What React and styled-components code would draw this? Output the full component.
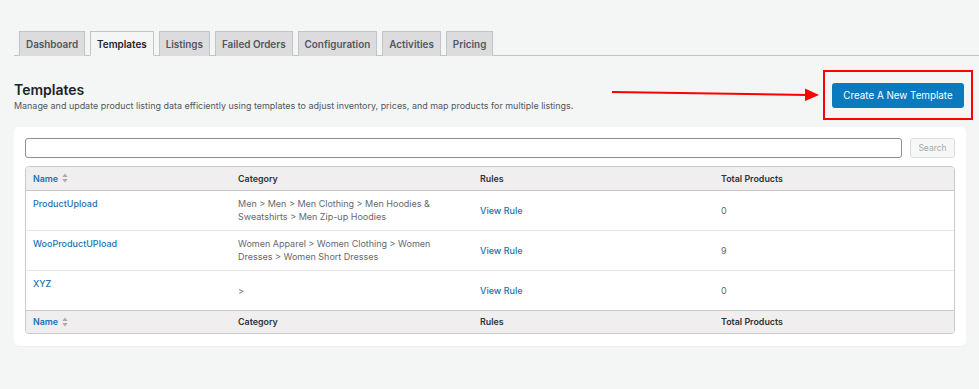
import React from "react";
import styled, { createGlobalStyle } from "styled-components";

const Global = createGlobalStyle`
  html, body { margin: 0; padding: 0; background: #f4f5f5; }
  body { font-family: Inter, "Noto Sans", sans-serif; color: #1d2327; }
  * { box-sizing: border-box; }
`;

const Page = styled.div`
  position: relative;
  width: 979px;
  height: 389px;
  padding: 31px 0 0 14px;
`;

const TabBar = styled.nav`
  display: flex;
  gap: 5px;
  padding-left: 5px;
  border-bottom: 1px solid #c3c4c7;
  height: 25px;
`;

const Tab = styled.a`
  display: flex;
  align-items: center;
  height: 25px;
  padding: 0 6px;
  font-size: 9.9px;
  font-weight: 600;
  color: ${(p) => (p.$active ? "#1d2327" : "#50575e")};
  background: ${(p) => (p.$active ? "#f4f5f5" : "#dcdcde")};
  border: 1px solid #c3c4c7;
  border-bottom: ${(p) => (p.$active ? "1px solid #f4f5f5" : "none")};
  text-decoration: none;
  cursor: pointer;
`;

const Header = styled.div`
  width: 952px;
  display: flex;
  justify-content: space-between;
  align-items: flex-start;
  margin-top: 14px;
  height: 57px;
`;

const TitleBlock = styled.div`
  padding-top: 11px;
`;

const Title = styled.h1`
  margin: 0;
  font-size: 14px;
  font-weight: 600;
  line-height: 17px;
  color: #1d2327;
`;

const Desc = styled.p`
  margin: 2px 0 0;
  font-size: 8.95px;
  line-height: 12px;
  color: #50575e;
`;

const Highlight = styled.div`
  border: 2px solid #ff0000;
  padding: 11px 7px 10px 7px;
  margin-right: -7px;
`;

const PrimaryButton = styled.button`
  display: block;
  width: 132px;
  height: 25px;
  background: #0a7abf;
  color: #fff;
  border: none;
  border-radius: 3px;
  font-family: Inter, "Noto Sans", sans-serif;
  font-size: 9.8px;
  cursor: pointer;
`;

const Arrow = styled.svg`
  position: absolute;
  left: 610px;
  top: 86px;
`;

const Card = styled.section`
  width: 952px;
  background: #fff;
  border-radius: 5px;
  padding: 11px 11px 12px;
  box-shadow: 0 1px 1px rgba(0, 0, 0, 0.03);
`;

const SearchRow = styled.div`
  display: flex;
  gap: 8px;
  margin-bottom: 8px;
`;

const SearchInput = styled.input`
  flex: 1;
  height: 20px;
  border: 1px solid #8c8f94;
  border-radius: 3px;
  background: #fff;
`;

const SearchButton = styled.button`
  width: 45px;
  height: 20px;
  border: 1px solid #dcdcde;
  background: #f6f7f7;
  color: #a7aaad;
  border-radius: 3px;
  font-family: Inter, "Noto Sans", sans-serif;
  font-size: 8.5px;
  padding: 0;
`;

const TableWrap = styled.div`
  border: 1px solid #c9c9cc;
  border-radius: 4px;
  overflow: hidden;
`;

const Table = styled.table`
  width: 100%;
  border-collapse: collapse;
  table-layout: fixed;
`;

const HeadCell = styled.th`
  height: 23px;
  background: #f0eeee;
  text-align: left;
  font-size: 8.9px;
  font-weight: 600;
  color: #2c3338;
  padding: 0 7px;
  ${(p) => (p.$foot ? "border-top: 1px solid #c9c9cc;" : "border-bottom: 1px solid #c9c9cc;")}
`;

const SortLink = styled.a`
  display: inline-flex;
  align-items: center;
  gap: 4px;
  color: #2271b1;
  text-decoration: none;
`;

const Cell = styled.td`
  height: 40px;
  padding: ${(p) => (p.$top ? "6px 7px 0 7px" : "0 7px")};
  vertical-align: ${(p) => (p.$top ? "top" : "middle")};
  font-size: 9px;
  line-height: 13px;
  color: #646970;
  border-top: ${(p) => (p.$first ? "none" : "1px solid #e6e6e8")};
`;

const Link = styled.a`
  color: #2271b1;
  text-decoration: none;
  font-weight: 500;
`;

const SortIcon = () => (
  <svg width="6" height="10" viewBox="0 0 6 10">
    <path d="M3 0.5 L5.6 4 H0.4 Z" fill="#a7aaad" />
    <path d="M3 9.5 L5.6 6 H0.4 Z" fill="#a7aaad" />
  </svg>
);

const rows = [
  { name: "ProductUpload", cat: "Men > Men > Men Clothing > Men Hoodies & Sweatshirts > Men Zip-up Hoodies", total: "0" },
  { name: "WooProductUPload", cat: "Women Apparel > Women Clothing > Women Dresses > Women Short Dresses", total: "9" },
  { name: "XYZ", cat: ">", total: "0" },
];

const tabs = ["Dashboard", "Templates", "Listings", "Failed Orders", "Configuration", "Activities", "Pricing"];

const HeadRow = ({ foot }) => (
  <tr>
    <HeadCell $foot={foot}>
      <SortLink>
        Name <SortIcon />
      </SortLink>
    </HeadCell>
    <HeadCell $foot={foot}>Category</HeadCell>
    <HeadCell $foot={foot}>Rules</HeadCell>
    <HeadCell $foot={foot}>Total Products</HeadCell>
  </tr>
);

export default function App() {
  return (
    <>
      <Global />
      <Page>
        <TabBar>
          {tabs.map((t) => (
            <Tab key={t} $active={t === "Templates"}>
              {t}
            </Tab>
          ))}
        </TabBar>
        <Header>
          <TitleBlock>
            <Title>Templates</Title>
            <Desc>
              Manage and update product listing data efficiently using templates to adjust inventory, prices, and map
              products for multiple listings.
            </Desc>
          </TitleBlock>
          <Highlight>
            <PrimaryButton>Create A New Template</PrimaryButton>
          </Highlight>
        </Header>
        <Arrow width="212" height="16" viewBox="0 0 212 16">
          <line x1="2" y1="6" x2="197" y2="9" stroke="#ff0000" strokeWidth="2" />
          <path d="M195 2.5 L209 9 L195 15 Z" fill="#ff0000" />
        </Arrow>
        <Card>
          <SearchRow>
            <SearchInput />
            <SearchButton>Search</SearchButton>
          </SearchRow>
          <TableWrap>
            <Table>
              <colgroup>
                <col style={{ width: "205px" }} />
                <col style={{ width: "242px" }} />
                <col style={{ width: "241px" }} />
                <col />
              </colgroup>
              <thead>
                <HeadRow />
              </thead>
              <tbody>
                {rows.map((r, i) => (
                  <tr key={r.name}>
                    <Cell $top $first={i === 0}>
                      <Link>{r.name}</Link>
                    </Cell>
                    <Cell $first={i === 0}>{r.cat}</Cell>
                    <Cell $first={i === 0}>
                      <Link>View Rule</Link>
                    </Cell>
                    <Cell $first={i === 0}>{r.total}</Cell>
                  </tr>
                ))}
              </tbody>
              <tfoot>
                <HeadRow foot />
              </tfoot>
            </Table>
          </TableWrap>
        </Card>
      </Page>
    </>
  );
}
